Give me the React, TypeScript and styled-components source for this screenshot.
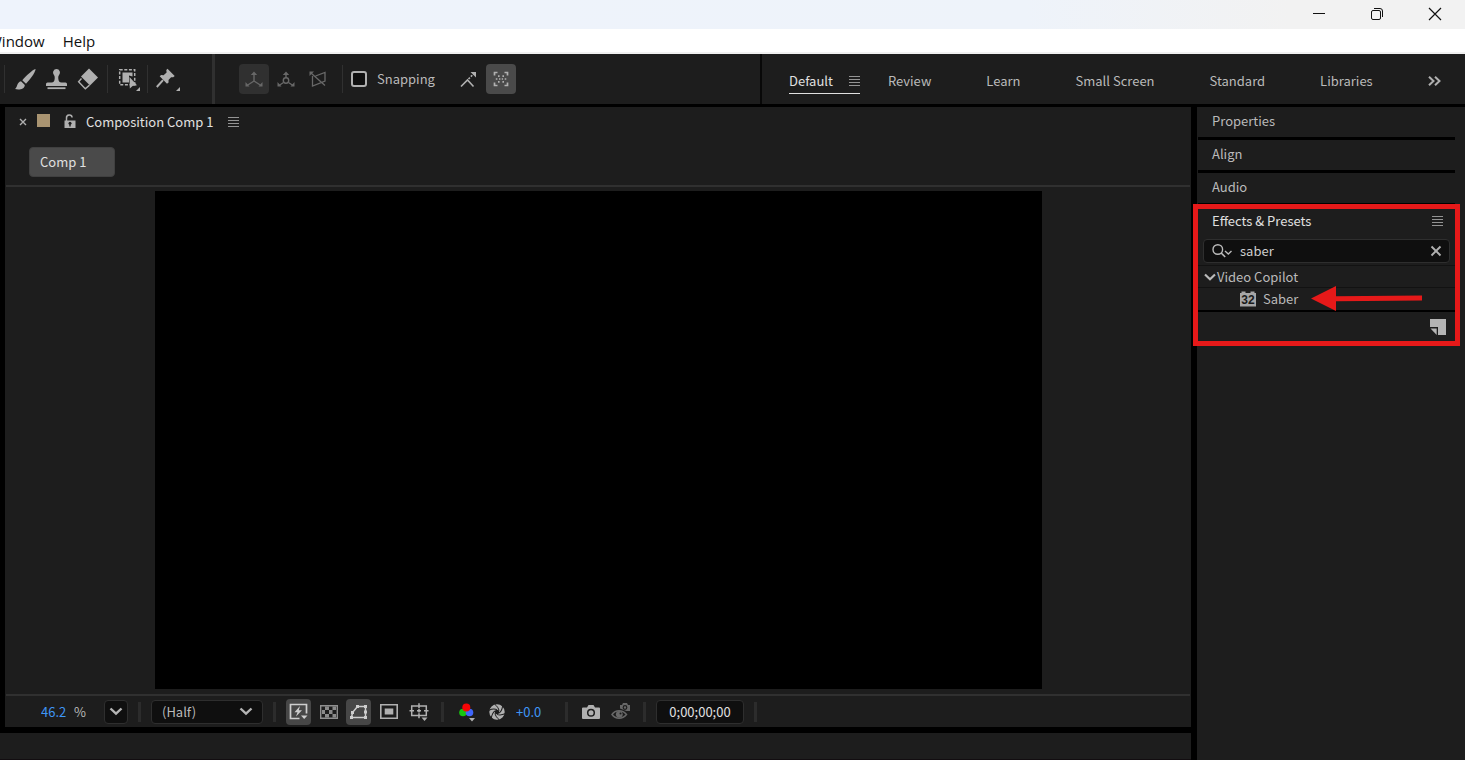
import React from "react";
import styled, { createGlobalStyle } from "styled-components";

const Global = createGlobalStyle`
  *, *::before, *::after { box-sizing: border-box; }
  body { margin: 0; background: #000; }
  button, input, select { font: inherit; color: inherit; margin: 0; }
`;

const color = {
  panel: "#1d1d1d",
  line: "#303030",
  field: "#0f0f0f",
  text: "#bababa",
  bright: "#e0e0e0",
  icon: "#b0b0b0",
  dim: "#686868",
  link: "#3f96f6",
  mark: "#e61919",
};

const Screen = styled.div`
  display: flex;
  flex-direction: column;
  min-height: 100vh;
  overflow: hidden;
  background: #000;
  color: ${color.text};
  font-family: "Noto Sans CJK JP", "Noto Sans", sans-serif;
  font-size: 13px;
  line-height: 20px;
`;

/* ---------- window frame ---------- */

const TitleBar = styled.header`
  display: flex;
  justify-content: flex-end;
  height: 29px;
  padding-right: 1px;
  background: linear-gradient(90deg, #eef3fc 0%, #eef3fa 70%, #f2f2f2 88%);
`;

const WindowButton = styled.button`
  display: grid;
  place-items: center;
  width: 58px;
  height: 28px;
  padding: 0;
  border: 0;
  background: none;
`;

const MenuBar = styled.nav`
  display: flex;
  gap: 18px;
  height: 25px;
  padding-top: 1px;
  border-bottom: 2px solid #f0f0f0;
  background: #fff;
  color: #111;
  font-family: "Open Sans", sans-serif;
  font-size: 15px;
`;

const MenuItem = styled.button<{ $clipped?: boolean }>`
  padding: 0;
  border: 0;
  background: none;
  line-height: 22px;
  margin-left: ${(p) => (p.$clipped ? "-12px" : "0")};
`;

/* ---------- toolbar ---------- */

const Toolbar = styled.div`
  display: flex;
  height: 50px;
  margin-bottom: 3px;
  background: ${color.panel};
`;

const Tools = styled.div`
  display: flex;
  flex: 1 1 760px;
  align-items: center;
  padding-left: 4px;
`;

const ToolGroup = styled.div<{ $before?: number; $after?: number }>`
  display: flex;
  align-items: center;
  gap: 2px;
  padding: 0 ${(p) => p.$after ?? 3}px 0 ${(p) => p.$before ?? 6}px;
`;

const ToolButton = styled.button<{ $tone?: string; $fill?: string }>`
  display: grid;
  place-items: center;
  width: 30px;
  height: 30px;
  padding: 0;
  border: 0;
  border-radius: 4px;
  background: ${(p) => p.$fill ?? "none"};
  color: ${(p) => p.$tone ?? color.icon};
`;

const Rule = styled.span<{ $full?: boolean }>`
  width: ${(p) => (p.$full ? "3px" : "1px")};
  height: ${(p) => (p.$full ? "50px" : "28px")};
  background: ${color.line};
`;

const SnapLabel = styled.label`
  display: flex;
  align-items: center;
  gap: 10px;
  padding: 0 19px 0 8px;
`;

const SnapBox = styled.input`
  appearance: none;
  width: 16px;
  height: 16px;
  border: 2px solid ${color.icon};
  border-radius: 3px;
  background: ${color.field};
`;

const Workspaces = styled.nav`
  display: flex;
  flex: 0 1 705px;
  align-items: center;
  gap: 28px;
  padding: 4px 0 0 27px;
  border-left: 2px solid #080808;
`;

const Workspace = styled.button<{ $active?: boolean }>`
  display: flex;
  align-items: center;
  gap: 16px;
  height: 26px;
  margin-right: ${(p) => (p.$active ? "0" : "27px")};
  padding: 0;
  border: 0;
  border-bottom: 1px solid ${(p) => (p.$active ? color.bright : "transparent")};
  background: none;
  color: ${(p) => (p.$active ? color.bright : color.text)};
  white-space: nowrap;
`;

/* ---------- work area ---------- */

const Work = styled.main`
  display: flex;
  flex: 1;
  gap: 6px;
`;

const LeftColumn = styled.div`
  display: flex;
  flex: 1;
  flex-direction: column;
  gap: 6px;
  min-width: 0;
`;

const Composition = styled.section`
  display: flex;
  flex: 1;
  flex-direction: column;
  margin-left: 5px;
  background: ${color.panel};
`;

const PanelTab = styled.div`
  display: flex;
  align-items: center;
  height: 30px;
  padding-left: 14px;
  color: ${color.bright};
`;

const BareButton = styled.button`
  display: grid;
  place-items: center;
  padding: 0;
  border: 0;
  background: none;
  color: ${color.icon};
`;

const Swatch = styled.span`
  width: 13px;
  height: 13px;
  margin: 0 14px 3px 10px;
  background: #a99471;
`;

const TabTitle = styled.span`
  margin: 0 15px 0 10px;
`;

const Breadcrumb = styled.div`
  height: 50px;
  padding: 10px 0 0 23px;
  margin: 0 1px;
  border-bottom: 2px solid ${color.line};
`;

const Crumb = styled.button`
  width: 86px;
  height: 30px;
  padding: 0 0 0 10px;
  border: 1px solid #404040;
  border-radius: 4px;
  background: #4a4a4a;
  color: ${color.bright};
  text-align: left;
`;

const Viewer = styled.div`
  display: flex;
  flex: 1;
  justify-content: center;
  padding: 4px 0 5px;
`;

const Frame = styled.div`
  aspect-ratio: 887 / 498;
  background: #000;
`;

const ViewBar = styled.div`
  display: flex;
  align-items: center;
  height: 33px;
  margin: 0 1px;
  padding-left: 35px;
  border-top: 2px solid ${color.line};
`;

const Zoom = styled.label`
  display: flex;
  gap: 5px;
  width: 63px;
`;

const ZoomValue = styled.input`
  width: 28px;
  padding: 0;
  border: 0;
  background: none;
  color: ${color.link};
`;

const Divider = styled.span`
  width: 3px;
  height: 20px;
  margin: 0 10px;
  background: #2c2c2c;
`;

const ZoomMenu = styled.button`
  display: grid;
  place-items: center;
  width: 24px;
  height: 24px;
  padding: 0;
  border: 1px solid #2e2e2e;
  border-radius: 4px;
  background: ${color.field};
`;

const SelectWrap = styled.div`
  display: grid;
  align-items: center;
  width: 112px;
  > * { grid-area: 1 / 1; }
  > svg { justify-self: end; margin-right: 10px; pointer-events: none; }
`;

const Resolution = styled.select`
  appearance: none;
  width: 100%;
  height: 24px;
  padding: 0 10px;
  border: 1px solid #2e2e2e;
  border-radius: 4px;
  background: ${color.field};
`;

const ViewTools = styled.div`
  display: flex;
  gap: 5px;
`;

const ViewButton = styled.button<{ $on?: boolean; $dim?: boolean }>`
  display: grid;
  place-items: center;
  width: 25px;
  height: 26px;
  padding: 0;
  border: 0;
  border-radius: 4px;
  background: ${(p) => (p.$on ? "#474747" : "none")};
  color: ${(p) => (p.$dim ? color.dim : p.$on ? "#cecece" : color.icon)};
`;

const Exposure = styled.input`
  width: 39px;
  margin-left: 7px;
  padding: 0;
  border: 0;
  background: none;
  color: ${color.link};
`;

const Timecode = styled.input`
  width: 88px;
  height: 24px;
  padding: 0;
  border: 1px solid #2e2e2e;
  border-radius: 4px;
  background: ${color.field};
  color: ${color.bright};
  text-align: center;
`;

const Timeline = styled.section`
  height: 27px;
  border-bottom: 1px solid #120d10;
  background: ${color.panel};
`;

/* ---------- side panels ---------- */

const Side = styled.aside`
  flex: 0 0 268px;
  padding: 0 10px 0 1px;
  background: ${color.panel};
`;

const Collapsed = styled.button`
  display: block;
  width: 100%;
  height: 33px;
  padding: 0 14px 2px;
  border: 0;
  border-bottom: 3px solid #000;
  background: none;
  text-align: left;
`;

const Effects = styled.section`
  position: relative;
`;

const Highlight = styled.div`
  position: absolute;
  inset: -2px -5px -4px;
  border: 5px solid ${color.mark};
  pointer-events: none;
`;

const Pointer = styled.svg`
  position: absolute;
  top: 80px;
  right: 33px;
  pointer-events: none;
`;

const EffectsHead = styled.div`
  display: flex;
  align-items: center;
  justify-content: space-between;
  height: 33px;
  padding: 0 12px 4px 14px;
  color: ${color.bright};
`;

const Search = styled.label`
  display: flex;
  align-items: center;
  height: 24px;
  margin: 0 5px 2px;
  padding: 0 7px 0 8px;
  border: 1px solid #2e2e2e;
  border-radius: 4px;
  background: ${color.field};
`;

const SearchInput = styled.input`
  flex: 1;
  min-width: 0;
  margin-left: 8px;
  padding: 0;
  border: 0;
  background: none;
  color: #cecece;
`;

const TreeRow = styled.div<{ $depth?: number }>`
  display: flex;
  align-items: center;
  height: 22px;
  padding-left: ${(p) => (p.$depth ? "42px" : "6px")};
  gap: ${(p) => (p.$depth ? "7px" : "1px")};
  border-top: 1px solid #121212;
`;

const EffectsFoot = styled.div`
  display: flex;
  align-items: center;
  justify-content: flex-end;
  height: 32px;
  margin-top: 1px;
  padding-right: 9px;
  border-top: 2px solid #000;
`;

/* ---------- icons ---------- */

type IconProps = { w: number; h?: number; children: React.ReactNode };

const Icon = ({ w, h = w, children }: IconProps) => (
  <svg
    width={w}
    height={h}
    viewBox={`0 0 ${w} ${h}`}
    fill="none"
    stroke="currentColor"
    overflow="visible"
    aria-hidden="true"
  >
    {children}
  </svg>
);

const solid = { fill: "currentColor", stroke: "none" };

const MenuLines = () => (
  <Icon w={11} h={10}>
    <path d="M0 .5h11M0 3.5h11M0 6.5h11M0 9.5h11" stroke="#949494" strokeWidth="1.2" />
  </Icon>
);

const Chevron = () => (
  <Icon w={14} h={9}>
    <path d="M1.5 1.5 7 6.7l5.5-5.2" stroke="#b4b4b4" strokeWidth="2.4" />
  </Icon>
);

const Brush = () => (
  <Icon w={22}>
    <g {...solid}>
      <path d="M21.6 1C18 2 12 8 8.3 12.3L12 15.8C15.8 11.6 21.4 4.8 21.6 1z" />
      <path d="M1 21C3.5 19.5 2.6 14.4 7 13.3l3.8 3.6C10.6 21.3 5 22.2 1 21z" />
    </g>
  </Icon>
);

const Stamp = () => (
  <Icon w={22}>
    <g {...solid}>
      <path d="M10.5 1a3.6 3.6 0 0 1 2.6 6c-.8 1-.9 2-.8 3.4.2 2.4 1 4 3.2 4.1H19.5a1.5 1.5 0 0 1 1.5 1.5V18H0v-2a1.500 1.500 0 0 1 1.500-1.500H5.500C7.700 14.400 8.500 12.800 8.700 10.400 8.800 9 8.700 8 7.900 7A3.600 3.600 0 0 1 10.500 1z" />
      <path d="M1.500 19.300h18v1.800h-18z" />
    </g>
  </Icon>
);

const Eraser = () => (
  <Icon w={22}>
    <path d="M11 .5 20 9.500l-8 8L3 8.500z" {...solid} />
    <path d="M3.500 10.500.6 13.700 7.300 20.700l4.200-3.600" strokeWidth="1.400" />
  </Icon>
);

const GroupSelect = () => (
  <Icon w={22}>
    <path d="M1.700 1.700h15v15h-15z" strokeWidth="1.500" strokeDasharray="3 1.600" />
    <path d="M4.500 4.500h10v4l-3.500-1v7H4.500z" {...solid} />
    <path d="m11.500 9 .3 11.500 2.800-2.500 4.400-.7z" {...solid} />
    <path d="M22 19v4h-4z" {...solid} />
  </Icon>
);

const Pin = () => (
  <Icon w={22}>
    <path
      d="M9.500.8 16.700 8 15.200 9.300l-2.100-.1-2.600 2.800.1 2.400-1.600 1.300L1.700 8.300 3.100 6.900l2.500.3 3-2.800-.3-2.300z"
      {...solid}
    />
    <path d="M5 12.200-1.200 19" strokeWidth="2" />
    <path d="M22 19v4h-4z" {...solid} />
  </Icon>
);

const AxisHeads = () => (
  <path d="m9 .5 3.200 3.500H5.800zM.5 15.500v-4.500l4 4.500zM17.500 15.500v-4.500l-4 4.500z" {...solid} />
);

const LocalAxis = () => (
  <Icon w={18} h={16}>
    <path d="M9 2v8M9 10l-7 4.500M9 10l7 4.500" strokeWidth="1.400" />
    <AxisHeads />
  </Icon>
);

const WorldAxis = () => (
  <Icon w={18} h={16}>
    <path d="M9 2v5M6.500 11.500 2 14.500M11.500 11.500l4.500 3" strokeWidth="1.400" />
    <circle cx="9" cy="9.500" r="2.700" strokeWidth="1.400" />
    <AxisHeads />
  </Icon>
);

const ViewAxis = () => (
  <Icon w={18} h={16}>
    <path d="M2 2l14 12.500M3.500 5v10L16 10V1.500L6.500 5" strokeWidth="1.300" />
    <path d="M.5.500h4.500L.5 5z" {...solid} />
  </Icon>
);

const SnapEdge = () => (
  <Icon w={16}>
    <path d="M0 15.500 6.500 9l6 6.500" strokeWidth="1.600" />
    <path d="M7.500 8l5-5" strokeWidth="1.600" strokeDasharray="2 1.300" />
    <path d="M9.500 1H15v5.500z" {...solid} />
  </Icon>
);

const SnapBounds = () => (
  <Icon w={16}>
    <path d="M1.500 4.500v-3h3M11.500 1.500h3v3M14.500 11.500v3h-3M4.500 14.500h-3v-3" strokeWidth="1.700" />
    <path
      d="M5 4.300h1.600V6H5zM9.400 4.300H11V6H9.400zM2.800 7.200h1.600v1.600H2.800zM6 7.200h1.400v1.600H6zM8.700 7.200h1.400v1.600H8.700zM11.700 7.200h1.600v1.600h-1.600zM5 10h1.600v1.700H5zM9.400 10H11v1.700H9.400z"
      {...solid}
    />
  </Icon>
);

const Padlock = () => (
  <Icon w={12} h={14}>
    <path d="M2.500 6V3a2.800 2.800 0 0 1 5.600-.5" strokeWidth="1.500" />
    <path d="M.5 5.500h11V13H.5z" {...solid} />
    <circle cx="6" cy="8.200" r="1.500" fill="#1d1d1d" stroke="none" />
    <path d="M6 8v3.500" stroke="#1d1d1d" strokeWidth="1.400" />
  </Icon>
);

const FastPreview = () => (
  <Icon w={19} h={17}>
    <path d="M10.500 15.500h-9v-14h16v9" strokeWidth="1.700" />
    <path d="M11 3 5.500 9.300h3L7 13.500l6-6.300H9.800z" {...solid} />
    <path d="M12 12.500h6.500L15.200 16z" {...solid} />
  </Icon>
);

const Transparency = () => (
  <Icon w={18} h={14}>
    <path d="M.7.700h16.600v12.600H.7z" strokeWidth="1.400" stroke="#8f8f8f" />
    <path
      d="M5 1.500h4V5H5zM12.500 1.500H16V5h-3.500zM2 5h3v4H2zM9 5h3.500v4H9zM5 9h4v3.500H5zM12.500 9H16v3.500h-3.500z"
      fill="#8a8a8a"
      stroke="none"
    />
  </Icon>
);

const MaskPath = () => (
  <Icon w={19} h={16}>
    <path d="M2.500 13.500 3.500 8.500 8.500 2.500h8v11z" strokeWidth="1.500" />
    <path
      d="M7 1h3v3H7zM15 1h3v3h-3zM15 12h3v3h-3zM1 12h3v3H1zM2 7h3v3H2zM15 6.500h3v3h-3z"
      {...solid}
    />
  </Icon>
);

const Region = () => (
  <Icon w={18} h={15}>
    <path d="M.8.800h16.400v13.400H.8z" strokeWidth="1.600" />
    <path d="M4.700 4.500h8.600v6H4.700z" {...solid} />
  </Icon>
);

const Guides = () => (
  <Icon w={18} h={16}>
    <path d="M1.700 2h14.600v9.500H1.700z" strokeWidth="1.500" />
    <path d="M9-.8v5M9 9.300v5M-.5 6.800H4M14 6.800h4.500M7 6.800h4M9 5v3.600" strokeWidth="1.500" />
    <path d="M11.500 13.500h6l-3 3.500z" {...solid} />
  </Icon>
);

const Channels = () => (
  <Icon w={16} h={18}>
    <circle cx="4" cy="9.500" r="3.800" fill="#17c40f" stroke="none" />
    <circle cx="10.500" cy="9.500" r="3.800" fill="#3f66fb" stroke="none" />
    <circle cx="7.300" cy="4.500" r="4" fill="#f60505" stroke="none" />
    <path d="M10 15h6l-3 3.500z" {...solid} />
  </Icon>
);

const Aperture = () => (
  <Icon w={16}>
    <circle cx="8" cy="8" r="5" strokeWidth="5.400" />
    {[0, 60, 120, 180, 240, 300].map((turn) => (
      <path
        key={turn}
        d="M10 6.800C9.800 4.500 8 2 5.500 0"
        stroke="#1d1d1d"
        strokeWidth="1"
        transform={`rotate(${turn} 8 8)`}
      />
    ))}
  </Icon>
);

const Camera = () => (
  <Icon w={18} h={14}>
    <path
      d="M1 2.500h4L6.500 0h5L13 2.500h4a1 1 0 0 1 1 1V13a1 1 0 0 1-1 1H1a1 1 0 0 1-1-1V3.500a1 1 0 0 1 1-1z"
      {...solid}
    />
    <circle cx="9" cy="7.800" r="3.300" stroke="#1d1d1d" strokeWidth="1.500" />
  </Icon>
);

const ShowSnapshot = () => (
  <Icon w={19} h={17}>
    <path d="M1 11.500C4.500 6.500 11.500 6.500 15.500 11.500 11.500 16.500 4.500 16.500 1 11.500z" strokeWidth="1.500" />
    <circle cx="8.300" cy="11.300" r="3.400" {...solid} />
    <circle cx="9.500" cy="10.500" r="1" fill="#1d1d1d" stroke="none" />
    <path d="M9 2h2l1-2h4l1 2h2v6h-3.500L9 5.500z" {...solid} />
    <circle cx="14" cy="4.500" r="1.800" stroke="#1d1d1d" strokeWidth="1.200" />
  </Icon>
);

const Magnifier = () => (
  <Icon w={20} h={14}>
    <circle cx="5.800" cy="5.500" r="4.800" strokeWidth="1.400" />
    <path d="m9.200 9 4 4" strokeWidth="1.600" />
    <path d="m13 7 3.300 3L19.500 7" strokeWidth="1.400" />
  </Icon>
);

const EffectBadge = () => (
  <svg width="16" height="16" viewBox="0 0 16 16" aria-hidden="true">
    <path d="M1.500 2V.5h4V2h5V.5h4V2H16v13.500H0V2z" fill="#a6a6a6" />
    <text
      x="8"
      y="13"
      textAnchor="middle"
      fontFamily="Liberation Sans, sans-serif"
      fontSize="12"
      fontWeight="700"
      fill="#1a1a1a"
    >
      32
    </text>
  </svg>
);

const NewPreset = () => (
  <Icon w={16}>
    <path d="M0 0h16v16H8V8H0z" fill="#b4b4b4" stroke="none" />
    <path d="M.5 9.500H6.700V16z" fill="#b4b4b4" stroke="none" />
  </Icon>
);

/* ---------- page ---------- */

const otherWorkspaces = ["Review", "Learn", "Small Screen", "Standard", "Libraries"];
const collapsedPanels = ["Properties", "Align", "Audio"];

export default function App() {
  return (
    <Screen>
      <Global />
      <TitleBar>
        <WindowButton aria-label="Minimize">
          <Icon w={12}>
            <path d="M0 5.500h12" stroke="#111" />
          </Icon>
        </WindowButton>
        <WindowButton aria-label="Restore">
          <Icon w={12}>
            <rect x=".5" y="2.500" width="9" height="9" rx="1.500" stroke="#111" />
            <path d="M3 .5h6a2.500 2.500 0 0 1 2.500 2.500v6" stroke="#111" />
          </Icon>
        </WindowButton>
        <WindowButton aria-label="Close">
          <Icon w={12}>
            <path d="m0 0 12 12M12 0 0 12" stroke="#111" strokeWidth="1.200" />
          </Icon>
        </WindowButton>
      </TitleBar>
      <MenuBar>
        <MenuItem $clipped>Window</MenuItem>
        <MenuItem>Help</MenuItem>
      </MenuBar>

      <Toolbar>
        <Tools>
          <Rule />
          <ToolGroup $before={5}>
            <ToolButton aria-label="Brush"><Brush /></ToolButton>
            <ToolButton aria-label="Clone stamp"><Stamp /></ToolButton>
            <ToolButton aria-label="Eraser"><Eraser /></ToolButton>
          </ToolGroup>
          <Rule />
          <ToolGroup>
            <ToolButton aria-label="Roto brush"><GroupSelect /></ToolButton>
          </ToolGroup>
          <Rule />
          <ToolGroup $after={28}>
            <ToolButton aria-label="Puppet pin"><Pin /></ToolButton>
          </ToolGroup>
          <Rule $full />
          <ToolGroup $before={24} $after={9}>
            <ToolButton aria-label="Local axis" $tone={color.dim} $fill="#303030"><LocalAxis /></ToolButton>
            <ToolButton aria-label="World axis" $tone={color.dim}><WorldAxis /></ToolButton>
            <ToolButton aria-label="View axis" $tone={color.dim}><ViewAxis /></ToolButton>
          </ToolGroup>
          <Rule />
          <SnapLabel>
            <SnapBox type="checkbox" />
            Snapping
          </SnapLabel>
          <ToolGroup $before={0}>
            <ToolButton aria-label="Snap to edges"><SnapEdge /></ToolButton>
            <ToolButton aria-label="Snap to bounds" $fill="#4a4a4a"><SnapBounds /></ToolButton>
          </ToolGroup>
        </Tools>
        <Workspaces>
          <Workspace $active>
            Default
            <MenuLines />
          </Workspace>
          {otherWorkspaces.map((name) => (
            <Workspace key={name}>{name}</Workspace>
          ))}
          <BareButton aria-label="More workspaces">
            <Icon w={13} h={10}>
              <path d="m1 .7 4.500 4.300L1 9.300M7 .7 11.500 5 7 9.300" strokeWidth="2" />
            </Icon>
          </BareButton>
        </Workspaces>
      </Toolbar>

      <Work>
        <LeftColumn>
          <Composition>
            <PanelTab>
              <BareButton aria-label="Close panel">
                <Icon w={8}>
                  <path d="m1 1 6 6M7 1 1 7" strokeWidth="1.400" />
                </Icon>
              </BareButton>
              <Swatch />
              <BareButton aria-label="Lock"><Padlock /></BareButton>
              <TabTitle>Composition Comp 1</TabTitle>
              <BareButton aria-label="Panel menu"><MenuLines /></BareButton>
            </PanelTab>
            <Breadcrumb>
              <Crumb>Comp 1</Crumb>
            </Breadcrumb>
            <Viewer>
              <Frame />
            </Viewer>
            <ViewBar>
              <Zoom>
                <ZoomValue defaultValue="46.2" aria-label="Magnification" />
                %
              </Zoom>
              <ZoomMenu aria-label="Magnification presets"><Chevron /></ZoomMenu>
              <Divider />
              <SelectWrap>
                <Resolution aria-label="Resolution">
                  <option>(Half)</option>
                </Resolution>
                <Chevron />
              </SelectWrap>
              <Divider />
              <ViewTools>
                <ViewButton $on aria-label="Fast previews"><FastPreview /></ViewButton>
                <ViewButton aria-label="Transparency grid"><Transparency /></ViewButton>
                <ViewButton $on aria-label="Mask visibility"><MaskPath /></ViewButton>
                <ViewButton aria-label="Region of interest"><Region /></ViewButton>
                <ViewButton aria-label="Guides"><Guides /></ViewButton>
              </ViewTools>
              <Divider />
              <ViewTools>
                <ViewButton aria-label="Channels"><Channels /></ViewButton>
                <ViewButton aria-label="Reset exposure"><Aperture /></ViewButton>
              </ViewTools>
              <Exposure defaultValue="+0.0" aria-label="Exposure" />
              <Divider />
              <ViewTools>
                <ViewButton aria-label="Take snapshot"><Camera /></ViewButton>
                <ViewButton $dim aria-label="Show snapshot"><ShowSnapshot /></ViewButton>
              </ViewTools>
              <Divider />
              <Timecode defaultValue="0;00;00;00" aria-label="Current time" />
              <Divider />
            </ViewBar>
          </Composition>
          <Timeline />
        </LeftColumn>

        <Side>
          {collapsedPanels.map((name) => (
            <Collapsed key={name}>{name}</Collapsed>
          ))}
          <Effects>
            <EffectsHead>
              Effects &amp; Presets
              <BareButton aria-label="Effects menu"><MenuLines /></BareButton>
            </EffectsHead>
            <Search>
              <Magnifier />
              <SearchInput defaultValue="saber" aria-label="Search effects" />
              <BareButton aria-label="Clear search">
                <Icon w={12}>
                  <path d="m1.500 1.500 9 9M10.500 1.500l-9 9" strokeWidth="1.900" />
                </Icon>
              </BareButton>
            </Search>
            <TreeRow>
              <Icon w={12} h={8}>
                <path d="m1 1.500 5 4.700 5-4.700" strokeWidth="2.200" />
              </Icon>
              Video Copilot
            </TreeRow>
            <TreeRow $depth={1}>
              <EffectBadge />
              Saber
            </TreeRow>
            <EffectsFoot>
              <BareButton aria-label="New preset"><NewPreset /></BareButton>
            </EffectsFoot>
            <Highlight />
            <Pointer width="111" height="25" viewBox="0 0 111 25" aria-hidden="true">
              <path d="M0 12.500 25 0V10.200L111 9.500v5l-86 .7V25z" fill={color.mark} />
            </Pointer>
          </Effects>
        </Side>
      </Work>
    </Screen>
  );
}
